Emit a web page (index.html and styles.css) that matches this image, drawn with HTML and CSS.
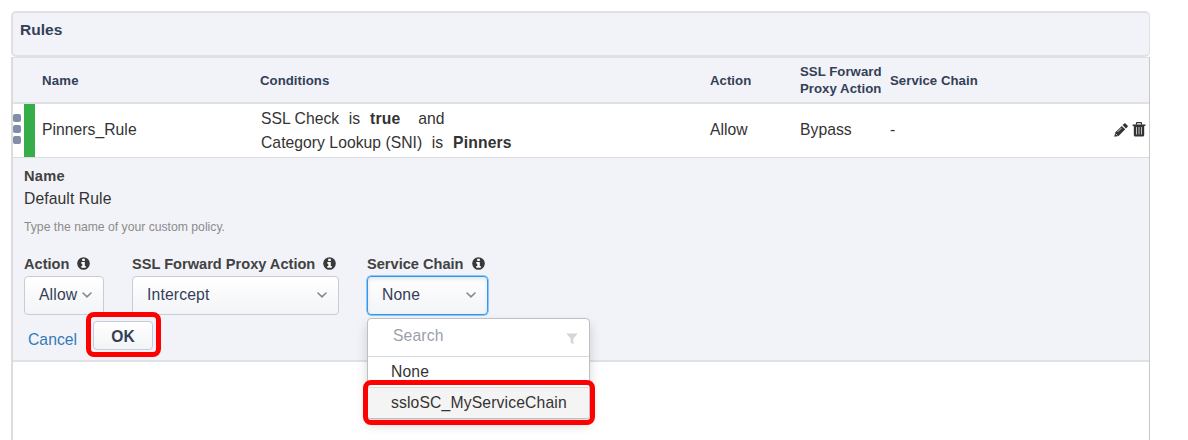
FILE: index.html
```html
<!DOCTYPE html>
<html lang="en">
<head>
<meta charset="utf-8">
<title>Rules</title>
<link rel="stylesheet" href="styles.css">
</head>
<body>
<svg class="defs" aria-hidden="true">
  <symbol id="info" viewBox="0 0 13 13"><circle cx="6.5" cy="6.5" r="6.3" fill="#393939"/><path d="M5.2 1.8h2.6v2.1H5.2zM4.3 5h3.5v4h1v1.8H4.3V9h1V6.7h-1z" fill="#fff"/></symbol>
  <symbol id="chevron" viewBox="0 0 10 6"><path d="M1 1l4 3.8L9 1" fill="none" stroke="#85888f" stroke-width="1.6" stroke-linecap="round"/></symbol>
</svg>
<main class="rules">
  <h1 class="title">Rules</h1>
  <section class="table">
    <div class="grid head">
      <span class="c-name">Name</span>
      <span>Conditions</span>
      <span>Action</span>
      <span>SSL Forward<br>Proxy Action</span>
      <span>Service Chain</span>
    </div>
    <div class="grid row">
      <div class="c-name lead">
        <span class="grip"><i></i><i></i><i></i></span>
        <span class="bar"></span>
        <span class="text">Pinners_Rule</span>
      </div>
      <div class="conditions">
        <div>SSL Check <span class="is">is</span><b>true</b><span class="and">and</span></div>
        <div>Category Lookup (SNI) <span class="is">is</span><b>Pinners</b></div>
      </div>
      <span class="text">Allow</span>
      <span class="text">Bypass</span>
      <span class="text">-</span>
      <div class="tools">
        <svg width="14" height="14" viewBox="0 0 14 14" fill="#333"><path d="M.3 13.7l.9-4.2 6.6-6.6 3.4 3.4-6.6 6.6zM8.6 2.1L10.2.5q.6-.6 1.3 0l2 2q.7.7 0 1.4l-1.6 1.6z"/><path d="M1.6 10.7l1.7 1.7M3.7 8.8l4-4" stroke="#fff" stroke-width=".8"/></svg>
        <svg width="14" height="15" viewBox="0 0 14 15"><path d="M4.5 2.8V1.2q0-.5.5-.5h4q.5 0 .5.5v1.6" fill="none" stroke="#333" stroke-width="1.2"/><path d="M.6 2.5h12.8v1.4h-1.2v9q0 1.6-1.5 1.6H3.3q-1.5 0-1.5-1.6v-9H.6z" fill="#333"/><path d="M4.5 5v7.5M7 5v7.5M9.5 5v7.5" stroke="#c4c4c4" stroke-width="1"/></svg>
      </div>
    </div>
    <form class="editor">
      <div class="label">Name</div>
      <div class="value">Default Rule</div>
      <div class="hint">Type the name of your custom policy.</div>
      <div class="fields">
        <div class="field f-action">
          <div class="label">Action <svg class="info"><use href="#info"/></svg></div>
          <div class="select"><span>Allow</span><svg class="chev"><use href="#chevron"/></svg></div>
        </div>
        <div class="field f-proxy">
          <div class="label">SSL Forward Proxy Action <svg class="info"><use href="#info"/></svg></div>
          <div class="select"><span>Intercept</span><svg class="chev"><use href="#chevron"/></svg></div>
        </div>
        <div class="field f-chain">
          <div class="label">Service Chain <svg class="info"><use href="#info"/></svg></div>
          <div class="select focus"><span>None</span><svg class="chev"><use href="#chevron"/></svg></div>
          <div class="menu">
            <div class="search"><span>Search</span><svg width="12" height="12" viewBox="0 0 12 12"><path d="M.2.5h11.6L7.4 5.6v6L4.7 9.6v-4z" fill="#d3d5d9"/></svg></div>
            <div class="option">None</div>
            <div class="option active">ssloSC_MyServiceChain</div>
            <div class="mark mark-option"></div>
          </div>
        </div>
      </div>
      <div class="actions">
        <a class="cancel">Cancel</a>
        <div class="ok">OK<div class="mark mark-ok"></div></div>
      </div>
    </form>
  </section>
</main>
</body>
</html>
```

FILE: styles.css
```css
* { box-sizing: border-box; }

body {
  margin: 0;
  height: 440px;
  overflow: hidden;
  background: #fff;
  font-family: "Liberation Sans", Arial, sans-serif;
  font-size: 15.7px;
  letter-spacing: .04px;
  color: #333;
}

.defs { position: absolute; width: 0; height: 0; }

.rules {
  display: flex;
  flex-direction: column;
  width: 1150px;
  height: 440px;
  padding: 11px 0 0 11px;
}

.title {
  flex: none;
  height: 46px;
  margin: 0;
  padding: 8px 0 0 7px;
  border: 2px solid #e0e1e4;
  border-right-width: 1px;
  border-radius: 5px;
  background: #f2f3f8;
  font-size: 15.5px;
  line-height: 18px;
  color: #334057;
}

.table {
  flex: 1;
  border: solid #dcdcdd;
  border-width: 0 1px 0 2px;
  border-right-color: #c8c8c8;
}

.grid {
  display: grid;
  grid-template-columns: 247px 450px 90px 90px 1fr 35px;
  align-items: center;
}

.head {
  height: 47px;
  border: solid #e0e1e5;
  border-width: 1px 0 2px;
  background: #f2f3f8;
  font-size: 13.2px;
  font-weight: bold;
  line-height: 17px;
  color: #334057;
}

.head .c-name { padding-left: 29px; letter-spacing: .2px; }

.row { height: 54px; border-bottom: 1px solid #dcdde1; background: #fff; }
.row .text { padding-bottom: 2px; }

.lead { display: flex; align-items: center; height: 53px; }
.grip { display: flex; flex-direction: column; gap: 3px; width: 11px; padding-bottom: 3px; }
.grip i { width: 8px; height: 8px; border-radius: 2px; background: #7f8fa9; }
.bar { width: 11px; height: 53px; margin-right: 7px; background: #35ae49; }

.conditions { padding-left: 1px; line-height: 24px; white-space: nowrap; }
.conditions .is { margin: 0 10px 0 5px; }
.conditions .and { margin-left: 18px; }
.conditions b { letter-spacing: .15px; }

.tools { display: flex; align-items: center; gap: 4px; padding-bottom: 2px; }

.editor {
  height: 204px;
  padding: 8px 0 0 11px;
  border-bottom: 2px solid #e0e1e5;
  background: #f2f3f8;
}

.label { font-size: 14.6px; font-weight: bold; letter-spacing: 0; line-height: 20px; color: #424242; white-space: nowrap; }
.editor > .label { letter-spacing: .3px; }
.value { padding-top: 1px; line-height: 24px; letter-spacing: .1px; }
.hint { margin-top: 7px; font-size: 12.2px; letter-spacing: 0; line-height: 18px; color: #8b8b8b; }

.fields { display: flex; gap: 28px; margin-top: 18px; }
.f-action { width: 80px; }
.f-proxy { width: 207px; }
.f-chain { position: relative; width: 121px; }

.info { width: 13px; height: 13px; margin-left: 4px; vertical-align: -1px; }

.select {
  display: flex;
  align-items: center;
  justify-content: space-between;
  height: 39px;
  margin-top: 2px;
  padding: 0 11px 1px 14px;
  border: 1px solid #c9cbd9;
  border-radius: 4px;
  background: linear-gradient(#fff, #f3f4f7);
  letter-spacing: .15px;
  color: #334057;
}
.select.focus { border-color: #2c9af0; box-shadow: 0 0 0 .5px #2c9af0, inset 0 2px 4px #e2e3e8; }
.chev { width: 10px; height: 6px; }

.actions { display: flex; height: 40px; padding: 6px 0 0 4px; }
.cancel { width: 65px; padding-top: 9px; line-height: 20px; color: #3479b7; }
.ok {
  position: relative;
  width: 60px;
  height: 29px;
  border: 1px solid #c9cbd9;
  border-radius: 4px;
  background: linear-gradient(#fff, #f3f4f7);
  font-size: 15.6px;
  font-weight: bold;
  line-height: 29px;
  text-align: center;
  color: #334057;
}

.mark { position: absolute; border: 5px solid #fe0000; border-radius: 8px; }
.mark-ok { inset: -10px -9px -8px -8px; }

.menu {
  position: absolute;
  top: 64px;
  left: 0;
  width: 223px;
  height: 101px;
  border: 1px solid #bfbfc2;
  border-radius: 4px;
  background: #fff;
  box-shadow: 0 6px 12px rgba(0, 0, 0, .16);
}
.search {
  display: flex;
  align-items: center;
  justify-content: space-between;
  height: 38px;
  padding: 0 11px 3px 25px;
  border-bottom: 1px solid #d9dadd;
  letter-spacing: .15px;
  color: #9b9fac;
}
.search svg { margin-top: 5px; }
.option { height: 30px; padding-left: 23px; line-height: 29px; letter-spacing: .15px; }
.option.active { height: 31px; border-top: 1px solid #ddd; border-radius: 0 0 3px 3px; background: #f4f4f4; line-height: 30px; }
.mark-option { inset: 61px -6px -7px -5px; }
```
